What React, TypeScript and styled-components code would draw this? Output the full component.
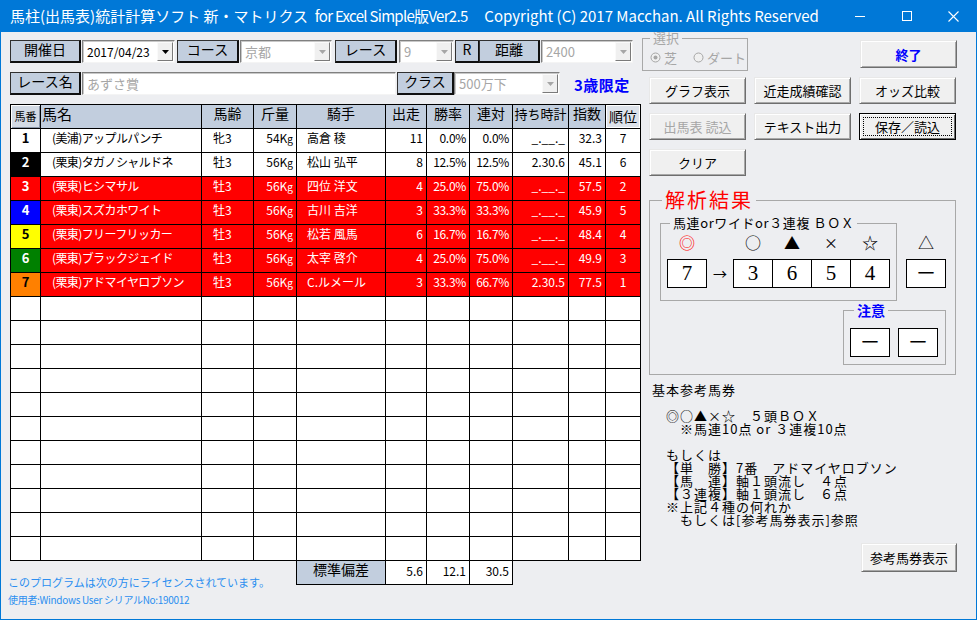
import React from 'react';
import styled, { createGlobalStyle, css } from 'styled-components';

const FONT = `"Noto Sans CJK JP", "Noto Sans", sans-serif`;

const GlobalStyle = createGlobalStyle`
  html, body { margin: 0; padding: 0; }
  body { font-family: ${FONT}; background: #edeef1; }
  * { box-sizing: border-box; }
`;

// Window frame
const Window = styled.div`
  width: 977px;
  height: 620px;
  display: flex;
  flex-direction: column;
  overflow: hidden;
  background: #edeef1;
`;

const TitleBar = styled.div`
  height: 32px;
  flex: none;
  display: flex;
  align-items: center;
  background: #0078d7;
  color: #fff;
  padding-left: 10px;
`;

const TitleText = styled.div`
  font-family: ${FONT};
  font-size: 15px;
  white-space: pre;
  line-height: 20px;
`;

const TitleTight = styled.span`
  letter-spacing: -0.7px;
`;

const CaptionButtons = styled.div`
  margin-left: auto;
  display: flex;
`;

const CaptionBtn = styled.div`
  width: 47px;
  height: 32px;
  display: flex;
  align-items: center;
  justify-content: center;
`;

const Body = styled.div`
  flex: 1;
  display: flex;
  border: 1px solid #0078d7;
  border-top: none;
`;

const LeftPane = styled.div`
  width: 639px;
  flex: none;
  padding: 8px 0 0 9px;
`;

const RightPane = styled.div`
  flex: 1;
  display: flex;
  flex-direction: column;
`;

// Top form
const FormRow = styled.div<{ $mt?: number }>`
  display: flex;
  align-items: stretch;
  height: 23px;
  margin-top: ${p => p.$mt ?? 0}px;
`;

const TagLabel = styled.div<{ $w: number; $ml?: number }>`
  flex: none;
  width: ${p => p.$w}px;
  margin-left: ${p => p.$ml ?? 0}px;
  background: #c2cede;
  border: 1px solid #303030;
  border-right-color: #101010;
  border-bottom-color: #101010;
  border-right-width: 2px;
  border-bottom-width: 2px;
  font-size: 14px;
  line-height: 17px;
  text-align: center;
  color: #000;
`;

const Combo = styled.div<{ $w: number; $ml?: number; $off?: boolean }>`
  flex: none;
  display: flex;
  width: ${p => p.$w}px;
  margin-left: ${p => p.$ml ?? 0}px;
  background: #fff;
  border: 1px solid;
  border-color: #808080 #f4f4f4 #f4f4f4 #808080;
  box-shadow: inset 1px 1px #c8c8c8;
  color: ${p => (p.$off ? '#a6a6a6' : '#000')};
`;

const ComboText = styled.div<{ $size?: number }>`
  flex: 1;
  padding-left: 4px;
  font-size: ${p => p.$size ?? 13}px;
  line-height: 21px;
  white-space: nowrap;
  overflow: hidden;
`;

const DropBtn = styled.div`
  width: 16px;
  flex: none;
  margin: 1px 1px 1px 0;
  display: flex;
  align-items: center;
  justify-content: center;
  background: #f0f0f0;
  border: 1px solid;
  border-color: #fafafa #7a7a7a #7a7a7a #fafafa;
`;

const LimitNote = styled.div`
  margin-left: 14px;
  color: #0000ff;
  font-weight: 700;
  font-size: 15px;
  line-height: 25px;
  letter-spacing: 0.5px;
`;

// Main table
const DataTable = styled.table`
  margin-top: 9px;
  border-collapse: collapse;
  table-layout: fixed;
  width: 630px;
  background: #fff;
`;

const HeadCell = styled.th<{ $align?: string; $size?: number; $raised?: boolean; $light?: boolean }>`
  height: 24px;
  padding: 0 1px;
  border: 1px solid #000;
  background: ${p => (p.$light ? '#dde2ea' : '#c2cede')};
  font-weight: 400;
  font-size: ${p => p.$size ?? 14}px;
  line-height: 17px;
  vertical-align: top;
  text-align: ${p => p.$align ?? 'center'};
  color: #000;
  white-space: nowrap;
  ${p =>
    p.$raised &&
    css`
      background: #d3dae4;
      box-shadow: inset 1px 1px #fff, inset -1px -1px #8a96a8;
      vertical-align: middle;
    `}
  ${p =>
    p.$light &&
    css`
      box-shadow: inset 1px 1px #fff, inset -1px -1px #fff;
      vertical-align: middle;
    `}
`;

const Row = styled.tr<{ $red?: boolean }>`
  height: 24px;
  background: ${p => (p.$red ? '#ff0000' : '#fff')};
  color: ${p => (p.$red ? '#fff' : '#000')};
`;

const Cell = styled.td<{ $align: string; $pl?: number; $ls?: number }>`
  height: 24px;
  padding: 1px 3px 0 ${p => p.$pl ?? 3}px;
  border: 1px solid #000;
  font-size: 12px;
  line-height: 16px;
  letter-spacing: ${p => p.$ls ?? 0}px;
  vertical-align: top;
  text-align: ${p => p.$align};
  white-space: nowrap;
  overflow: hidden;
`;

const Unit = styled.span`
  font-size: 10px;
`;

const NoCell = styled.td<{ $bg: string; $fg: string }>`
  height: 24px;
  padding: 0;
  border: 1px solid #000;
  background: ${p => p.$bg};
  color: ${p => p.$fg};
  font-weight: 700;
  font-size: 13px;
  line-height: 17px;
  text-align: center;
  vertical-align: top;
`;

// Bottom of the left pane
const BottomRow = styled.div`
  display: flex;
  align-items: flex-start;
`;

const License = styled.div`
  width: 288px;
  margin-left: -2px;
  padding-top: 14px;
  color: #2b8ef0;
  font-size: 11px;
  line-height: 15px;
  white-space: nowrap;
`;

const LicenseSub = styled.div`
  font-size: 10px;
  line-height: 20px;
  letter-spacing: -0.3px;
`;

const StatsTable = styled.table`
  margin-top: -1px;
  border-collapse: collapse;
  table-layout: fixed;
  width: 217px;
  background: #fff;
`;

const StatLabel = styled.td`
  height: 24px;
  padding: 0;
  border: 1px solid #000;
  background: #c2cede;
  font-size: 14px;
  line-height: 16px;
  text-align: center;
  vertical-align: top;
`;

const StatValue = styled.td`
  height: 24px;
  padding: 2px 3px 0 0;
  border: 1px solid #000;
  font-size: 12px;
  line-height: 16px;
  text-align: right;
  vertical-align: top;
`;

// Right pane parts
const TopRow = styled.div`
  display: flex;
  align-items: flex-start;
`;

const Group = styled.fieldset<{ $w: number }>`
  width: ${p => p.$w}px;
  margin: 0;
  padding: 0;
  min-inline-size: 0;
  border: 1px solid #a8a8a8;
`;

const SelectGroup = styled(Group)`
  margin-left: 2px;
  height: 39px;
  padding: 5px 0 0 7px;
`;

const GroupLegend = styled.legend<{ $ml: number; $size?: number; $color?: string; $lh?: number }>`
  margin-left: ${p => p.$ml}px;
  padding: 0 3px;
  font-size: ${p => p.$size ?? 13}px;
  line-height: ${p => p.$lh ?? 14}px;
  color: ${p => p.$color ?? '#000'};
`;

const RadioRow = styled.div`
  display: flex;
  align-items: center;
  height: 16px;
  font-size: 13px;
  color: #a6a6a6;
`;

const RadioItem = styled.span<{ $ml?: number }>`
  display: flex;
  align-items: center;
  gap: 3px;
  margin-left: ${p => p.$ml ?? 0}px;
`;

const Btn = styled.button<{ $w?: number; $h?: number; $off?: boolean; $blue?: boolean; $focus?: boolean }>`
  width: ${p => p.$w ?? 97}px;
  height: ${p => p.$h ?? 27}px;
  padding: 0;
  background: #f0f0f0;
  border: 1px solid;
  border-color: #e8e8e8 #6e6e6e #6e6e6e #e8e8e8;
  box-shadow: inset 1px 1px #fff, inset -1px -1px #a8a8a8;
  font-family: ${FONT};
  font-size: 13px;
  font-weight: ${p => (p.$blue ? 700 : 400)};
  color: ${p => (p.$off ? '#a6a6a6' : p.$blue ? '#0000ff' : '#000')};
  ${p =>
    p.$focus &&
    css`
      border-color: #000;
      box-shadow: inset 1px 1px #fff, inset -1px -1px #6e6e6e;
      outline: 1px dotted #000;
      outline-offset: -5px;
    `}
`;

const ExitBtn = styled(Btn)`
  margin: 8px 19px 0 auto;
`;

const ButtonGrid = styled.div`
  display: grid;
  grid-template-columns: repeat(3, 97px);
  grid-auto-rows: 27px;
  column-gap: 8px;
  row-gap: 9px;
  margin: 6px 0 0 9px;
`;

const ResultGroup = styled(Group)`
  margin: 12px 0 0 9px;
  padding: 4px 9px 9px 10px;
  display: flex;
  flex-direction: column;
`;

const ResultTop = styled.div`
  display: flex;
  align-items: flex-start;
`;

const BoxGroup = styled(Group)`
  padding: 2px 0 12px 6px;
`;

const SlotRow = styled.div<{ $mt?: number }>`
  display: flex;
  margin-top: ${p => p.$mt ?? 0}px;
`;

const Mark = styled.div<{ $joined?: boolean; $color?: string; $size?: number }>`
  width: 40px;
  height: 20px;
  margin-left: ${p => (p.$joined ? -1 : 0)}px;
  padding-top: 1px;
  text-align: center;
  font-size: ${p => p.$size ?? 16}px;
  line-height: 18px;
  color: ${p => p.$color ?? '#000'};
`;

const ValueBox = styled.div<{ $joined?: boolean }>`
  width: 40px;
  height: 29px;
  margin-left: ${p => (p.$joined ? -1 : 0)}px;
  background: #fff;
  border: 1px solid #000;
  text-align: center;
  font-family: "Liberation Serif", "Noto Sans CJK JP", serif;
  font-size: 21px;
  line-height: 26px;
  color: #000;
`;

const Arrow = styled.div`
  width: 26px;
  text-align: center;
  font-size: 14px;
  line-height: 29px;
`;

const TriangleCol = styled.div`
  margin-left: 9px;
  padding-top: 16px;
`;

const CautionGroup = styled(Group)`
  margin: 2px 0 0 auto;
  padding: 11px 0 7px 6px;
`;

const CautionBoxes = styled.div`
  display: flex;
  gap: 8px;
`;

const Memo = styled.div`
  margin: 8px 0 0 12px;
  font-size: 13px;
  line-height: 13px;
  letter-spacing: 1px;
  color: #000;
  text-spacing-trim: space-all;
`;

const MemoLine = styled.div<{ $indent?: number }>`
  height: 13px;
  padding-left: ${p => (p.$indent ?? 0) * 14}px;
  white-space: pre;
`;

const BottomBar = styled.div`
  display: flex;
  justify-content: flex-end;
  margin: 17px 19px 0 0;
`;

// Data
type Horse = {
  no: number;
  bg: string;
  fg: string;
  red: boolean;
  cells: string[];
};

const horses: Horse[] = [
  { no: 1, bg: '#ffffff', fg: '#000', red: false, cells: ['(美浦)アップルパンチ', '牝3', '54', '高倉 稜', '11', '0.0%', '0.0%', '_.__._', '32.3', '7'] },
  { no: 2, bg: '#000000', fg: '#fff', red: false, cells: ['(栗東)タガノシャルドネ', '牡3', '56', '松山 弘平', '8', '12.5%', '12.5%', '2.30.6', '45.1', '6'] },
  { no: 3, bg: '#ff0000', fg: '#fff', red: true, cells: ['(栗東)ヒシマサル', '牡3', '56', '四位 洋文', '4', '25.0%', '75.0%', '_.__._', '57.5', '2'] },
  { no: 4, bg: '#0000ff', fg: '#fff', red: true, cells: ['(栗東)スズカホワイト', '牡3', '56', '古川 吉洋', '3', '33.3%', '33.3%', '_.__._', '45.9', '5'] },
  { no: 5, bg: '#ffff00', fg: '#000', red: true, cells: ['(栗東)フリーフリッカー', '牡3', '56', '松若 風馬', '6', '16.7%', '16.7%', '_.__._', '48.4', '4'] },
  { no: 6, bg: '#008000', fg: '#fff', red: true, cells: ['(栗東)ブラックジェイド', '牡3', '56', '太宰 啓介', '4', '25.0%', '75.0%', '_.__._', '49.9', '3'] },
  { no: 7, bg: '#ff8000', fg: '#000', red: true, cells: ['(栗東)アドマイヤロブソン', '牡3', '56', 'C.ルメール', '3', '33.3%', '66.7%', '2.30.5', '77.5', '1'] },
];

const colWidths = [30, 161, 52, 43, 89, 41, 43, 43, 56, 37, 35];
const cellAlign = ['left', 'left', 'right', 'left', 'right', 'right', 'right', 'right', 'right', 'center'];
const cellPad = [11, 11, 3, 10, 3, 3, 3, 3, 3, 3];
const cellSpacing = [-0.6, 0, 0, 0, 0, -0.3, -0.3, 0, 0, 0];

const SP = '\u3000';
const memoLines: { text: string; indent: number }[] = [
  { text: '基本参考馬券', indent: 0 },
  { text: '', indent: 0 },
  { text: `◎○▲×☆${SP}５頭ＢＯＸ`, indent: 1 },
  { text: '※馬連10点 or ３連複10点', indent: 2 },
  { text: '', indent: 0 },
  { text: 'もしくは', indent: 1 },
  { text: `【単${SP}勝】7番${SP}アドマイヤロブソン`, indent: 1 },
  { text: `【馬${SP}連】軸１頭流し${SP}４点`, indent: 1 },
  { text: '【３連複】軸１頭流し　６点', indent: 1 },
  { text: '※上記４種の何れか', indent: 1 },
  { text: 'もしくは[参考馬券表示]参照', indent: 2 },
];

const DownArrow: React.FC<{ off?: boolean }> = ({ off }) => (
  <svg width="7" height="4" viewBox="0 0 7 4">
    <path d="M0 0h7L3.5 4z" fill={off ? '#a6a6a6' : '#000'} />
  </svg>
);

const Radio: React.FC<{ on?: boolean }> = ({ on }) => (
  <svg width="11" height="11" viewBox="0 0 11 11">
    <circle cx="5.5" cy="5.5" r="4.5" fill="#f0f0f0" stroke="#a6a6a6" />
    {on && <circle cx="5.5" cy="5.5" r="2" fill="#a6a6a6" />}
  </svg>
);

const ComboBox: React.FC<{ w: number; ml?: number; off?: boolean; text: string; drop?: boolean; size?: number }> = ({
  w,
  ml,
  off,
  text,
  drop = true,
  size,
}) => (
  <Combo $w={w} $ml={ml} $off={off}>
    <ComboText $size={size}>{text}</ComboText>
    {drop && (
      <DropBtn>
        <DownArrow off={off} />
      </DropBtn>
    )}
  </Combo>
);

export default function App() {
  const emptyRows = Array.from({ length: 11 }, (_, i) => i);
  return (
    <>
      <GlobalStyle />
      <Window>
        <TitleBar>
          <TitleText>
            {'馬柱(出馬表)統計計算ソフト 新・マトリクス  '}
            <TitleTight>for Excel Simple版Ver2.5</TitleTight>
            {'     Copyright (C) 2017 Macchan. All Rights Reserved'}
          </TitleText>
          <CaptionButtons>
            <CaptionBtn>
              <svg width="10" height="10" viewBox="0 0 10 10">
                <path d="M0 5.5h10" stroke="#fff" strokeWidth="1" />
              </svg>
            </CaptionBtn>
            <CaptionBtn>
              <svg width="10" height="10" viewBox="0 0 10 10">
                <rect x="0.5" y="0.5" width="9" height="9" fill="none" stroke="#fff" strokeWidth="1" />
              </svg>
            </CaptionBtn>
            <CaptionBtn>
              <svg width="11" height="11" viewBox="0 0 11 11">
                <path d="M0.5 0.5l10 10M10.5 0.5l-10 10" stroke="#fff" strokeWidth="1.1" />
              </svg>
            </CaptionBtn>
          </CaptionButtons>
        </TitleBar>

        <Body>
          <LeftPane>
            <FormRow>
              <TagLabel $w={71}>開催日</TagLabel>
              <ComboBox w={93} ml={1} text="2017/04/23" size={12} />
              <TagLabel $w={62} $ml={2}>コース</TagLabel>
              <ComboBox w={92} ml={1} off text="京都" />
              <TagLabel $w={62} $ml={3}>レース</TagLabel>
              <ComboBox w={55} ml={2} off text="9" />
              <TagLabel $w={25} $ml={1}>R</TagLabel>
              <TagLabel $w={61} $ml={-1}>距離</TagLabel>
              <ComboBox w={92} ml={1} off text="2400" />
            </FormRow>
            <FormRow $mt={9}>
              <TagLabel $w={71}>レース名</TagLabel>
              <ComboBox w={314} ml={1} off text="あずさ賞" drop={false} />
              <TagLabel $w={57} $ml={1}>クラス</TagLabel>
              <ComboBox w={106} ml={0} off text="500万下" />
              <LimitNote>3歳限定</LimitNote>
            </FormRow>

            <DataTable>
              <colgroup>
                {colWidths.map((w, i) => (
                  <col key={i} style={{ width: w }} />
                ))}
              </colgroup>
              <thead>
                <tr>
                  <HeadCell $raised $size={11}>馬番</HeadCell>
                  <HeadCell $align="left" $size={15}>馬名</HeadCell>
                  <HeadCell>馬齢</HeadCell>
                  <HeadCell>斤量</HeadCell>
                  <HeadCell>騎手</HeadCell>
                  <HeadCell>出走</HeadCell>
                  <HeadCell>勝率</HeadCell>
                  <HeadCell>連対</HeadCell>
                  <HeadCell $size={13}>持ち時計</HeadCell>
                  <HeadCell>指数</HeadCell>
                  <HeadCell $light>順位</HeadCell>
                </tr>
              </thead>
              <tbody>
                {horses.map(h => (
                  <Row key={h.no} $red={h.red}>
                    <NoCell $bg={h.bg} $fg={h.fg}>{h.no}</NoCell>
                    {h.cells.map((c, i) => (
                      <Cell key={i} $align={cellAlign[i]} $pl={cellPad[i]} $ls={cellSpacing[i]}>
                        {i === 2 ? (
                          <>
                            {c}K<Unit>g</Unit>
                          </>
                        ) : (
                          c
                        )}
                      </Cell>
                    ))}
                  </Row>
                ))}
                {emptyRows.map(r => (
                  <Row key={`e${r}`}>
                    {colWidths.map((_, i) => (
                      <Cell key={i} $align="left" />
                    ))}
                  </Row>
                ))}
              </tbody>
            </DataTable>

            <BottomRow>
              <License>
                <div>このプログラムは次の方にライセンスされています。</div>
                <LicenseSub>使用者:Windows User シリアルNo:190012</LicenseSub>
              </License>
              <StatsTable>
                <colgroup>
                  <col style={{ width: 89 }} />
                  <col style={{ width: 41 }} />
                  <col style={{ width: 43 }} />
                  <col style={{ width: 43 }} />
                </colgroup>
                <tbody>
                  <tr>
                    <StatLabel>標準偏差</StatLabel>
                    <StatValue>5.6</StatValue>
                    <StatValue>12.1</StatValue>
                    <StatValue>30.5</StatValue>
                  </tr>
                </tbody>
              </StatsTable>
            </BottomRow>
          </LeftPane>

          <RightPane>
            <TopRow>
              <SelectGroup $w={106}>
                <GroupLegend $ml={0} $lh={12} $color="#a6a6a6">選択</GroupLegend>
                <RadioRow>
                  <RadioItem>
                    <Radio on />芝
                  </RadioItem>
                  <RadioItem $ml={16}>
                    <Radio />ダート
                  </RadioItem>
                </RadioRow>
              </SelectGroup>
              <ExitBtn $h={28} $blue>終了</ExitBtn>
            </TopRow>

            <ButtonGrid>
              <Btn>グラフ表示</Btn>
              <Btn>近走成績確認</Btn>
              <Btn>オッズ比較</Btn>
              <Btn $off>出馬表 読込</Btn>
              <Btn>テキスト出力</Btn>
              <Btn $focus>保存／読込</Btn>
              <Btn>クリア</Btn>
            </ButtonGrid>

            <ResultGroup $w={307}>
              <GroupLegend $ml={2} $size={20} $lh={24} $color="#ff0000" style={{ letterSpacing: 2 }}>
                解析結果
              </GroupLegend>
              <ResultTop>
                <BoxGroup $w={238}>
                  <GroupLegend $ml={3} style={{ letterSpacing: 0.6 }}>馬連orワイドor３連複 ＢＯＸ</GroupLegend>
                  <SlotRow>
                    <Mark $color="#ff0000">◎</Mark>
                    <Arrow style={{ lineHeight: '20px' }} />
                    <Mark>○</Mark>
                    <Mark $joined>▲</Mark>
                    <Mark $joined $size={14}>×</Mark>
                    <Mark $joined>☆</Mark>
                  </SlotRow>
                  <SlotRow $mt={7}>
                    <ValueBox>7</ValueBox>
                    <Arrow>→</Arrow>
                    <ValueBox>3</ValueBox>
                    <ValueBox $joined>6</ValueBox>
                    <ValueBox $joined>5</ValueBox>
                    <ValueBox $joined>4</ValueBox>
                  </SlotRow>
                </BoxGroup>
                <TriangleCol>
                  <Mark>△</Mark>
                  <SlotRow $mt={7}>
                    <ValueBox>－</ValueBox>
                  </SlotRow>
                </TriangleCol>
              </ResultTop>
              <CautionGroup $w={103}>
                <GroupLegend $ml={4} $size={14} $color="#0000ff" style={{ fontWeight: 700 }}>
                  注意
                </GroupLegend>
                <CautionBoxes>
                  <ValueBox>－</ValueBox>
                  <ValueBox>－</ValueBox>
                </CautionBoxes>
              </CautionGroup>
            </ResultGroup>

            <Memo>
              {memoLines.map((l, i) => (
                <MemoLine key={i} $indent={l.indent}>
                  {l.text}
                </MemoLine>
              ))}
            </Memo>

            <BottomBar>
              <Btn $w={96} $h={29}>参考馬券表示</Btn>
            </BottomBar>
          </RightPane>
        </Body>
      </Window>
    </>
  );
}
